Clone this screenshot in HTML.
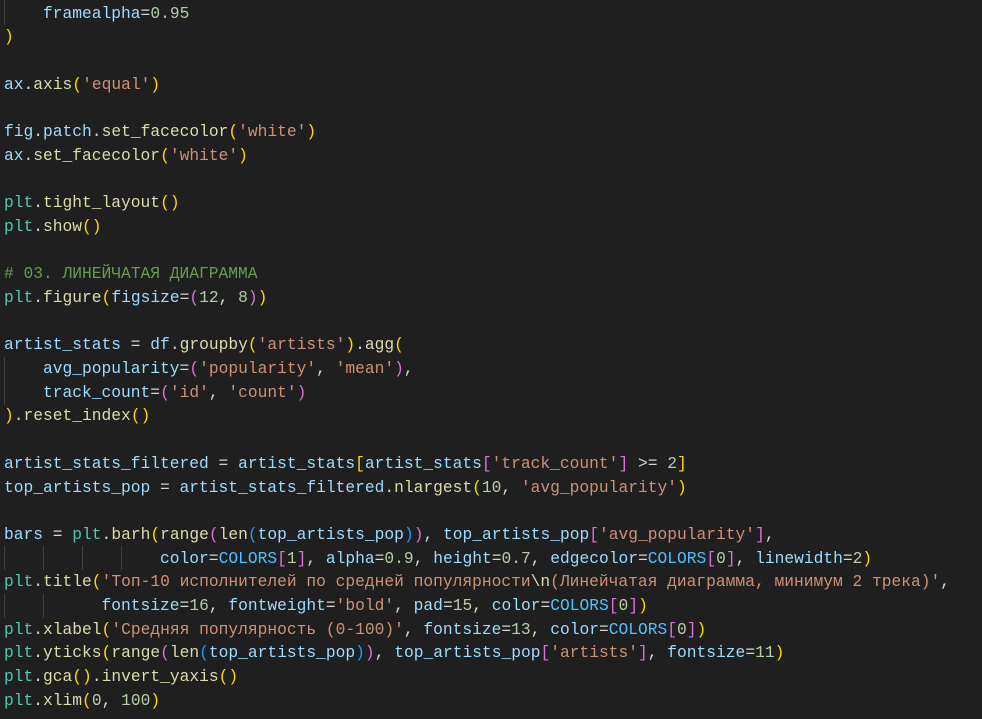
<!DOCTYPE html>
<html><head><meta charset="utf-8"><style>
html,body{margin:0;padding:0;background:#1f1f1f;width:982px;height:719px;overflow:hidden}
pre{margin:0;padding:1.5px 0 0 4px;font-family:"Liberation Mono","DejaVu Sans Mono",monospace;font-size:16.25px;line-height:23.7px;color:#d4d4d4;white-space:pre}
.v{color:#9cdcfe}.f{color:#dcdcaa}.s{color:#ce9178}.n{color:#b5cea8}.m{color:#4ec9b0}.c{color:#4fc1ff}
.y{color:#ffd700}.p{color:#da70d6}.b{color:#179fff}.k{color:#6a9955}
.g{position:absolute;width:1px;background:#404040}
</style></head><body>
<div class="g" style="left:4px;top:0;height:25px"></div>
<div class="g" style="left:4px;top:357px;height:48px"></div>
<div class="g" style="left:4px;top:546px;height:24px"></div>
<div class="g" style="left:43px;top:546px;height:24px"></div>
<div class="g" style="left:82px;top:546px;height:24px"></div>
<div class="g" style="left:121px;top:546px;height:24px"></div>
<div class="g" style="left:4px;top:594px;height:24px"></div>
<div class="g" style="left:43px;top:594px;height:24px"></div>
<pre>    <span class="v">framealpha</span>=<span class="n">0.95</span>
<span class="y">)</span>

<span class="v">ax</span>.<span class="f">axis</span><span class="y">(</span><span class="s">'equal'</span><span class="y">)</span>

<span class="v">fig</span>.<span class="v">patch</span>.<span class="f">set_facecolor</span><span class="y">(</span><span class="s">'white'</span><span class="y">)</span>
<span class="v">ax</span>.<span class="f">set_facecolor</span><span class="y">(</span><span class="s">'white'</span><span class="y">)</span>

<span class="m">plt</span>.<span class="f">tight_layout</span><span class="y">()</span>
<span class="m">plt</span>.<span class="f">show</span><span class="y">()</span>

<span class="k"># 03. ЛИНЕЙЧАТАЯ ДИАГРАММА</span>
<span class="m">plt</span>.<span class="f">figure</span><span class="y">(</span><span class="v">figsize</span>=<span class="p">(</span><span class="n">12</span>, <span class="n">8</span><span class="p">)</span><span class="y">)</span>

<span class="v">artist_stats</span> = <span class="v">df</span>.<span class="f">groupby</span><span class="y">(</span><span class="s">'artists'</span><span class="y">)</span>.<span class="f">agg</span><span class="y">(</span>
    <span class="v">avg_popularity</span>=<span class="p">(</span><span class="s">'popularity'</span>, <span class="s">'mean'</span><span class="p">)</span>,
    <span class="v">track_count</span>=<span class="p">(</span><span class="s">'id'</span>, <span class="s">'count'</span><span class="p">)</span>
<span class="y">)</span>.<span class="f">reset_index</span><span class="y">()</span>

<span class="v">artist_stats_filtered</span> = <span class="v">artist_stats</span><span class="y">[</span><span class="v">artist_stats</span><span class="p">[</span><span class="s">'track_count'</span><span class="p">]</span> &gt;= <span class="n">2</span><span class="y">]</span>
<span class="v">top_artists_pop</span> = <span class="v">artist_stats_filtered</span>.<span class="f">nlargest</span><span class="y">(</span><span class="n">10</span>, <span class="s">'avg_popularity'</span><span class="y">)</span>

<span class="v">bars</span> = <span class="m">plt</span>.<span class="f">barh</span><span class="y">(</span><span class="f">range</span><span class="p">(</span><span class="f">len</span><span class="b">(</span><span class="v">top_artists_pop</span><span class="b">)</span><span class="p">)</span>, <span class="v">top_artists_pop</span><span class="p">[</span><span class="s">'avg_popularity'</span><span class="p">]</span>,
                <span class="v">color</span>=<span class="c">COLORS</span><span class="p">[</span><span class="n">1</span><span class="p">]</span>, <span class="v">alpha</span>=<span class="n">0.9</span>, <span class="v">height</span>=<span class="n">0.7</span>, <span class="v">edgecolor</span>=<span class="c">COLORS</span><span class="p">[</span><span class="n">0</span><span class="p">]</span>, <span class="v">linewidth</span>=<span class="n">2</span><span class="y">)</span>
<span class="m">plt</span>.<span class="f">title</span><span class="y">(</span><span class="s">'Топ-10 исполнителей по средней популярности</span><span class="f">\n</span><span class="s">(Линейчатая диаграмма, минимум 2 трека)'</span>,
          <span class="v">fontsize</span>=<span class="n">16</span>, <span class="v">fontweight</span>=<span class="s">'bold'</span>, <span class="v">pad</span>=<span class="n">15</span>, <span class="v">color</span>=<span class="c">COLORS</span><span class="p">[</span><span class="n">0</span><span class="p">]</span><span class="y">)</span>
<span class="m">plt</span>.<span class="f">xlabel</span><span class="y">(</span><span class="s">'Средняя популярность (0-100)'</span>, <span class="v">fontsize</span>=<span class="n">13</span>, <span class="v">color</span>=<span class="c">COLORS</span><span class="p">[</span><span class="n">0</span><span class="p">]</span><span class="y">)</span>
<span class="m">plt</span>.<span class="f">yticks</span><span class="y">(</span><span class="f">range</span><span class="p">(</span><span class="f">len</span><span class="b">(</span><span class="v">top_artists_pop</span><span class="b">)</span><span class="p">)</span>, <span class="v">top_artists_pop</span><span class="p">[</span><span class="s">'artists'</span><span class="p">]</span>, <span class="v">fontsize</span>=<span class="n">11</span><span class="y">)</span>
<span class="m">plt</span>.<span class="f">gca</span><span class="y">()</span>.<span class="f">invert_yaxis</span><span class="y">()</span>
<span class="m">plt</span>.<span class="f">xlim</span><span class="y">(</span><span class="n">0</span>, <span class="n">100</span><span class="y">)</span>
</pre></body></html>
